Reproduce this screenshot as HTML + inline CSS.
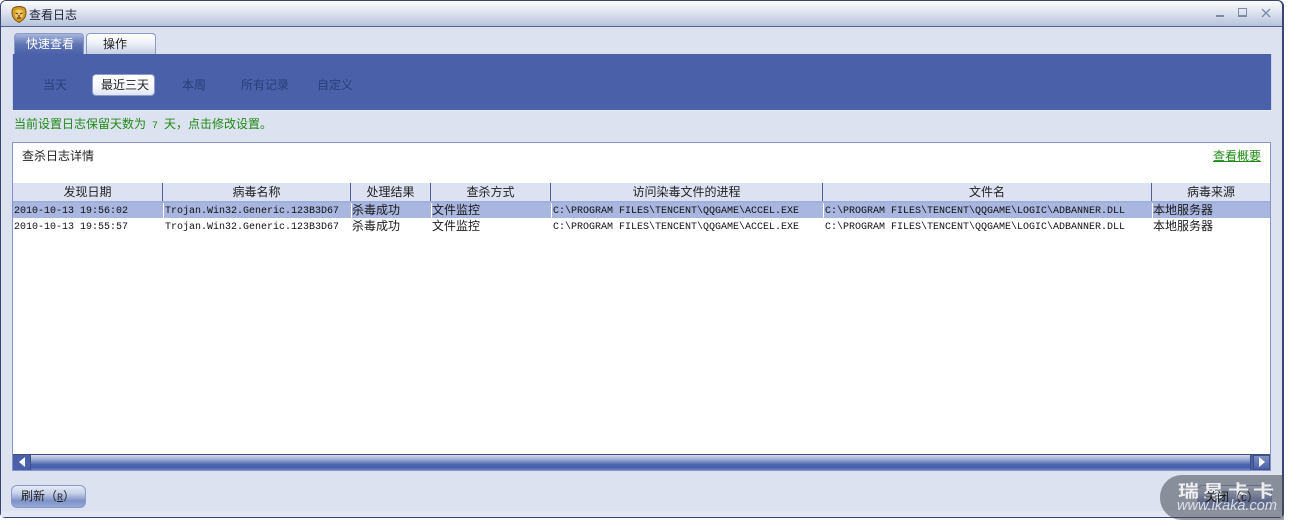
<!DOCTYPE html>
<html lang="zh">
<head>
<meta charset="utf-8">
<style>
html,body{margin:0;padding:0;background:#fff;}
body{width:1297px;height:526px;position:relative;overflow:hidden;font-family:"Liberation Sans","WenQuanYi Zen Hei","Noto Sans CJK SC",sans-serif;font-size:12px;color:#1a1a1a;}
div,span{position:absolute;box-sizing:border-box;white-space:nowrap;}
#win{left:0;top:0;width:1284px;height:518px;background:#dce2f0;border:1px solid #3a4670;border-width:1px 2px 1px 1px;border-radius:6px 6px 5px 5px;overflow:hidden;}
.t{line-height:16px;height:16px;}
.c{line-height:16px;height:16px;margin-top:-1px;color:#1a1a1a;}
.m{font-family:"Liberation Mono","WenQuanYi Zen Hei",monospace;font-size:10px;line-height:16px;height:16px;color:#111;margin-top:1px;}
.n{line-height:16px;height:16px;color:#25407a;}
.hd{top:183px;height:18px;line-height:18px;text-align:center;background:#dce2f1;color:#222;border-right:1px solid #4f6298;}
.btn{height:23px;top:485px;width:75px;border:1px solid #8a9bc8;border-radius:6px;background:linear-gradient(#e6ebf6 0%,#c6d0e8 35%,#7e92c8 70%,#96a8d6 100%);line-height:21px;color:#222;}
.ms{position:static;font-family:"Liberation Mono",monospace;font-size:10px;white-space:pre;}
</style>
</head>
<body>
<div id="win"></div>
<!-- title bar -->
<div style="left:1px;top:1px;width:1281px;height:25px;background:linear-gradient(#fbfcfe 0%,#e8ecf4 30%,#b6c3da 100%);border-radius:5px 5px 0 0;"></div>
<div style="left:1px;top:26px;width:1281px;height:1px;background:#52648f;"></div>
<svg style="position:absolute;left:11px;top:6px" width="16" height="17" viewBox="0 0 16 17"><path d="M3 1.500Q8 -.5 13 1.500Q15.500 3 15 8Q14.500 13 8 16.500Q1.500 13 1 8Q.5 3 3 1.500Z" fill="#d49a28" stroke="#6e4a10" stroke-width=".9"/><path d="M4.500 4.500Q8 2.500 11.500 4.500Q13 8 11 11.500Q8 14.500 5 11.500Q3 8 4.500 4.500Z" fill="#f0c860"/><path d="M4.500 7L7 8M11.500 7L9 8M6 12H10M8 9V11" stroke="#5a3208" stroke-width="1.200" fill="none"/></svg>
<div class="t" style="left:29px;top:7px;color:#1c2438;font-size:12px;">查看日志</div>
<!-- win controls -->
<div style="left:1216px;top:15px;width:8px;height:2px;background:#7b8bab;"></div>
<div style="left:1238px;top:8px;width:9px;height:9px;border:1px solid #7b8bab;border-bottom-width:2px;"></div>
<svg style="position:absolute;left:1261px;top:8px" width="10" height="10" viewBox="0 0 10 10"><path d="M1 1L9 9M9 1L1 9" stroke="#7b8bab" stroke-width="1.300"/></svg>
<!-- tabs -->
<div style="left:14px;top:33px;width:70px;height:21px;background:linear-gradient(#a9b7dc 0%,#5f76b5 50%,#4a60a9 100%);border:1px solid #8a9bc8;border-bottom:0;border-radius:4px 4px 0 0;color:#fff;line-height:20px;padding-left:11px;">快速查看</div>
<div style="left:86px;top:33px;width:70px;height:21px;background:linear-gradient(#fff 0%,#eef1f8 45%,#c5cde2 100%);border:1px solid #8a9bc8;border-bottom:0;border-radius:4px 4px 0 0;color:#222;line-height:20px;padding-left:16px;">操作</div>
<!-- blue panel -->
<div style="left:12px;top:54px;width:1260px;height:57px;background:#4a60a9;"></div>
<div style="left:12px;top:54px;width:1px;height:57px;background:#c8d1e6;"></div>
<div style="left:1271px;top:54px;width:1px;height:57px;background:#c8d1e6;"></div>
<div style="left:12px;top:110px;width:1260px;height:1px;background:#e6ebf5;"></div>
<div class="n" style="left:43px;top:77px;">当天</div>
<div style="left:92px;top:74px;width:63px;height:22px;border:1px solid #8a9bc8;border-radius:4px;background:linear-gradient(#fff 0%,#f6f8fc 60%,#dfe5f3 100%);line-height:21px;padding-left:8px;color:#222;">最近三天</div>
<div class="n" style="left:182px;top:77px;">本周</div>
<div class="n" style="left:241px;top:77px;">所有记录</div>
<div class="n" style="left:317px;top:77px;">自定义</div>
<!-- info -->
<div class="t" style="left:14px;top:116px;color:#1f8a14;">当前设置日志保留天数为<span class="ms"> 7 </span>天，点击修改设置。</div>
<!-- list box -->
<div style="left:12px;top:142px;width:1259px;height:329px;background:#fff;border:1px solid #8494c4;"></div>
<div class="t" style="left:22px;top:148px;color:#222;">查杀日志详情</div>
<div class="t" style="left:1213px;top:148px;color:#1f8a14;text-decoration:underline;">查看概要</div>
<!-- header -->
<div class="hd" style="left:13px;width:150px;">发现日期</div>
<div class="hd" style="left:163px;width:188px;">病毒名称</div>
<div class="hd" style="left:351px;width:80px;">处理结果</div>
<div class="hd" style="left:431px;width:120px;">查杀方式</div>
<div class="hd" style="left:551px;width:272px;">访问染毒文件的进程</div>
<div class="hd" style="left:823px;width:329px;">文件名</div>
<div class="hd" style="left:1152px;width:118px;border-right:0;">病毒来源</div>
<div style="left:13px;top:201px;width:1257px;height:2px;background:#9fb0dc;"></div>
<!-- selected row -->
<div style="left:13px;top:203px;width:1257px;height:15px;background:#a8b6e0;"></div>
<div style="left:163px;top:203px;width:1px;height:15px;background:#fff;"></div>
<div style="left:351px;top:203px;width:1px;height:15px;background:#fff;"></div>
<div style="left:431px;top:203px;width:1px;height:15px;background:#fff;"></div>
<div style="left:551px;top:203px;width:1px;height:15px;background:#fff;"></div>
<div style="left:823px;top:203px;width:1px;height:15px;background:#fff;"></div>
<div style="left:1152px;top:203px;width:1px;height:15px;background:#fff;"></div>
<!-- row 1 -->
<div class="m" style="left:14px;top:203px;">2010-10-13 19:56:02</div>
<div class="m" style="left:165px;top:203px;">Trojan.Win32.Generic.123B3D67</div>
<div class="c" style="left:352px;top:203px;">杀毒成功</div>
<div class="c" style="left:432px;top:203px;">文件监控</div>
<div class="m" style="left:553px;top:203px;">C:\PROGRAM FILES\TENCENT\QQGAME\ACCEL.EXE</div>
<div class="m" style="left:825px;top:203px;">C:\PROGRAM FILES\TENCENT\QQGAME\LOGIC\ADBANNER.DLL</div>
<div class="c" style="left:1153px;top:203px;">本地服务器</div>
<!-- row 2 -->
<div class="m" style="left:14px;top:219px;">2010-10-13 19:55:57</div>
<div class="m" style="left:165px;top:219px;">Trojan.Win32.Generic.123B3D67</div>
<div class="c" style="left:352px;top:219px;">杀毒成功</div>
<div class="c" style="left:432px;top:219px;">文件监控</div>
<div class="m" style="left:553px;top:219px;">C:\PROGRAM FILES\TENCENT\QQGAME\ACCEL.EXE</div>
<div class="m" style="left:825px;top:219px;">C:\PROGRAM FILES\TENCENT\QQGAME\LOGIC\ADBANNER.DLL</div>
<div class="c" style="left:1153px;top:219px;">本地服务器</div>
<!-- scrollbar -->
<div style="left:13px;top:454px;width:1257px;height:16px;background:#4a60a9;border-top:1px solid #3f5080;"></div>
<div style="left:30px;top:455px;width:1221px;height:15px;background:linear-gradient(#d4dbec 0%,#8fa1cf 35%,#4a62ae 65%,#4a62ae 85%,#7084c0 100%);border:1px solid #3f5080;border-width:0 1px;"></div>
<svg style="position:absolute;left:18px;top:456px" width="9" height="12" viewBox="0 0 9 12"><path d="M7 1V11L1 6Z" fill="#fff"/></svg>
<div style="left:1253px;top:455px;width:17px;height:15px;background:linear-gradient(#7d90c6,#4a60a9);border:1px solid #3f5080;"></div>
<svg style="position:absolute;left:1258px;top:456px" width="9" height="12" viewBox="0 0 9 12"><path d="M1 1V11L7 6Z" fill="#fff"/></svg>
<!-- bottom band -->
<div style="left:1px;top:511px;width:1281px;height:6px;background:#e3e8f4;"></div>
<!-- buttons -->
<div class="btn" style="left:11px;padding-left:9px;">刷新（<span class="ms" style="text-decoration:underline;">R</span>）</div>
<div class="btn" style="left:1197px;"></div>
<!-- watermark -->
<div style="left:1160px;top:475px;width:124px;height:45px;background:rgba(70,72,85,.55);border-radius:22px 0 0 22px;"></div>
<div style="left:1178px;top:482px;font-size:21px;line-height:20px;font-weight:bold;color:rgba(255,255,255,.85);letter-spacing:4px;transform:scaleY(.8);transform-origin:0 50%;">瑞星卡卡</div>
<div style="left:1177px;top:499px;font-size:14.500px;line-height:14px;font-style:italic;color:rgba(235,238,245,.85);">www.ikaka.com</div>
<div style="left:1205px;top:489px;line-height:16px;color:#1a1a1a;">关闭（<span class="ms">C</span>）</div>
</body>
</html>
